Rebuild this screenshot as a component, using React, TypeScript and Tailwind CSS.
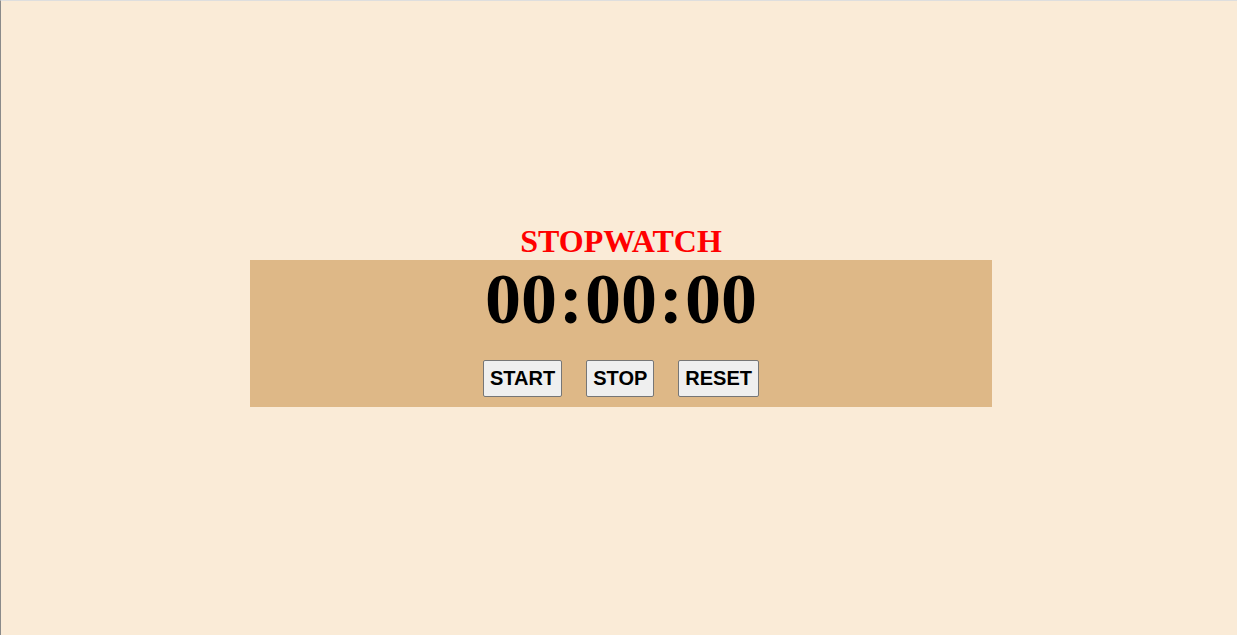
import React, { useEffect, useRef, useState } from 'react'

const pad = (n: number) => String(n).padStart(2, '0')

const App: React.FC = () => {
  const [ticks, setTicks] = useState(0)
  const [running, setRunning] = useState(false)
  const timer = useRef<number | null>(null)

  useEffect(() => {
    if (!running) return
    timer.current = window.setInterval(() => setTicks((t) => t + 1), 1000)
    return () => {
      if (timer.current) window.clearInterval(timer.current)
    }
  }, [running])

  const hours = Math.floor(ticks / 3600)
  const minutes = Math.floor((ticks % 3600) / 60)
  const seconds = ticks % 60

  const buttonClass =
    "px-[6px] py-[6px] text-[20px] leading-[23px] font-bold text-black bg-[#efefef] border border-[#767676] rounded-[2px] font-['Liberation_Sans',Arial,sans-serif]"

  return (
    <div className="min-h-screen w-full bg-[#faebd7] border-l border-l-[#8a8a8a] border-t border-t-[#dedede] pl-[4px] pb-[6px] flex flex-col items-center justify-center">
      {/* Title */}
      <h1 className="mb-[2px] text-[32px] leading-[34px] font-bold text-[#ff0000] font-['Liberation_Serif','Times_New_Roman',serif]">
        STOPWATCH
      </h1>

      {/* Clock panel */}
      <div className="w-[742px] bg-[#deb887] pt-[3px] pb-[10px] flex flex-col items-center">
        <div className="text-[72px] leading-[72px] font-bold text-black font-['Liberation_Serif','Times_New_Roman',serif] flex">
          <span>{pad(hours)}</span>
          <span className="mx-[2px]">:</span>
          <span>{pad(minutes)}</span>
          <span className="mx-[2px]">:</span>
          <span>{pad(seconds)}</span>
        </div>

        {/* Controls */}
        <div className="mt-[25px] flex gap-[24px]">
          <button className={buttonClass} onClick={() => setRunning(true)}>
            START
          </button>
          <button className={buttonClass} onClick={() => setRunning(false)}>
            STOP
          </button>
          <button
            className={buttonClass}
            onClick={() => {
              setRunning(false)
              setTicks(0)
            }}
          >
            RESET
          </button>
        </div>
      </div>
    </div>
  )
}

export default App
